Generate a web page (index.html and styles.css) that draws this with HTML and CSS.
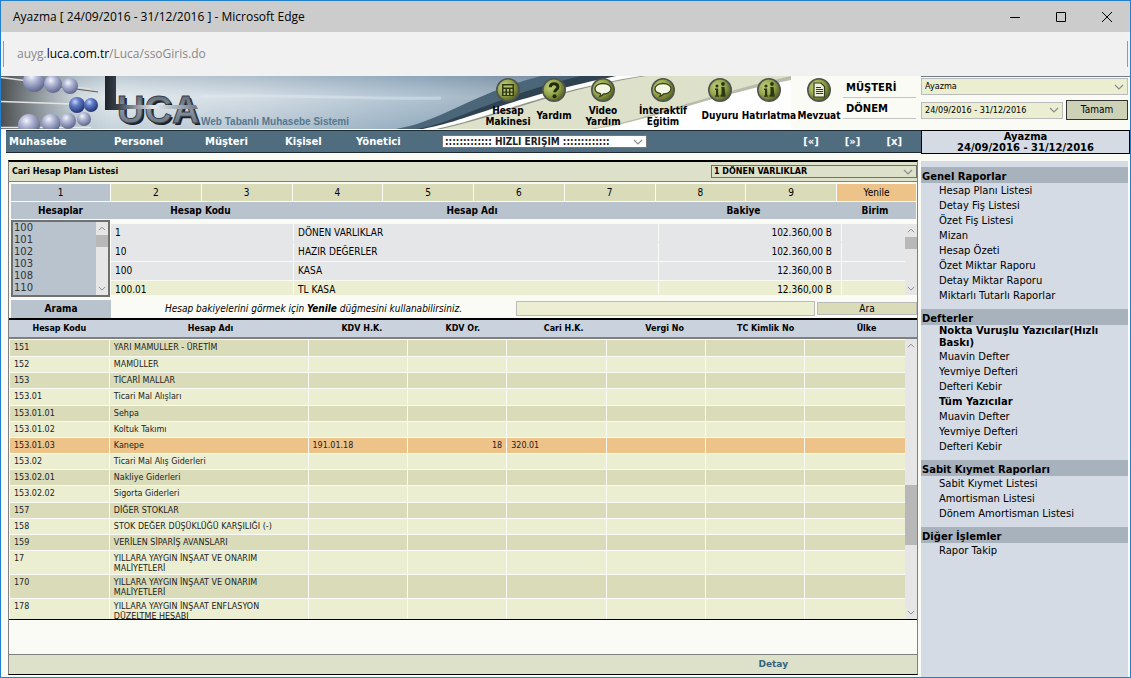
FILE: index.html
```html
<!DOCTYPE html>
<html lang="tr">
<head>
<meta charset="utf-8">
<title>Ayazma [ 24/09/2016 - 31/12/2016 ]</title>
<link rel="stylesheet" href="styles.css">
</head>
<body>
<svg width="0" height="0" class="defs" aria-hidden="true">
  <defs>
    <radialGradient id="ball" cx="38%" cy="30%" r="75%"><stop offset="0" stop-color="#f4f5fc"/><stop offset=".35" stop-color="#b3b9d6"/><stop offset="1" stop-color="#565e86"/></radialGradient>
    <radialGradient id="ballBlue" cx="38%" cy="30%" r="75%"><stop offset="0" stop-color="#c9d6fa"/><stop offset=".35" stop-color="#5f7cc8"/><stop offset="1" stop-color="#1d2d66"/></radialGradient>
    <radialGradient id="badge" cx="35%" cy="35%" r="75%"><stop offset="0" stop-color="#c4d27e"/><stop offset=".5" stop-color="#93a44a"/><stop offset="1" stop-color="#46521a"/></radialGradient>
    <linearGradient id="sky" x1="0" x2="1"><stop offset="0" stop-color="#8a949a"/><stop offset=".08" stop-color="#b4c0c6"/><stop offset=".2" stop-color="#dde6ea"/><stop offset=".45" stop-color="#c8d4de"/><stop offset=".75" stop-color="#9db4c6"/><stop offset="1" stop-color="#8094a4"/></linearGradient>
    <linearGradient id="shade" x1="0" x2="0" y1="0" y2="1"><stop offset="0" stop-color="#5f7c94" stop-opacity=".25"/><stop offset=".4" stop-color="#fff" stop-opacity=".2"/><stop offset="1" stop-color="#7390a6" stop-opacity=".2"/></linearGradient>
    <linearGradient id="rods" x1="0" x2="1"><stop offset="0" stop-color="#4e5052"/><stop offset="1" stop-color="#8a949a" stop-opacity="0"/></linearGradient>
    <linearGradient id="steel" x1="0" x2="0" y1="0" y2="1"><stop offset="0" stop-color="#525a66"/><stop offset=".5" stop-color="#8994a4"/><stop offset="1" stop-color="#5a6472"/></linearGradient>
    <linearGradient id="dark" x1="0" x2="1"><stop offset="0" stop-color="#1f242b"/><stop offset="1" stop-color="#4d5561"/></linearGradient>
    <linearGradient id="bar" x1="0" x2="1"><stop offset="0" stop-color="#3a424d"/><stop offset=".45" stop-color="#e6eaee"/><stop offset="1" stop-color="#6e7884"/></linearGradient>
    <symbol id="up" viewBox="0 0 8 5"><path d="M1 4.2 4 1.2 7 4.2" fill="none" stroke="#8c8c8c"/></symbol>
    <symbol id="down" viewBox="0 0 10 6"><path d="M1 1 5 5 9 1" fill="none" stroke="#8c8c8c" stroke-width="1.2"/></symbol>
    <symbol id="disc" viewBox="0 0 24 24"><circle cx="12" cy="12" r="11.2" fill="url(#badge)" stroke="#50544f" stroke-width="1.6"/></symbol>
    <symbol id="bubble" viewBox="0 0 24 24"><use href="#disc"/><path d="M12 5.5c4.800 0 8 2.300 8 5.300s-3.300 5.200-7.500 5.200c-.9 1.200-2 2-3.600 2.400.6-.9.8-1.700.6-2.700C6.300 15 4 13.200 4 10.800c0-3 3.200-5.300 8-5.300z" fill="#f4f6e4" stroke="#3b4418" stroke-width="1.300"/></symbol>
    <symbol id="people" viewBox="0 0 24 24"><use href="#disc"/><g fill="#2d3613"><circle cx="9" cy="8" r="1.600"/><path d="M7 10.500h3.200v7h1v1.300H7v-1.300h1v-5.500H7z"/><circle cx="15" cy="6" r="1.900"/><path d="M13.200 9h3.300l1 8.300v1.500h-5v-1.500l1-1v-5.500z"/></g></symbol>
  </defs>
</svg>
<div class="window">
  <header class="titlebar">
    <span class="title">Ayazma [ 24/09/2016 - 31/12/2016 ] - Microsoft Edge</span>
    <button class="win" aria-label="Simge durumuna küçült"><svg width="12" height="12"><path d="M1 6.500h10" stroke="#000"/></svg></button>
    <button class="win" aria-label="Ekranı kapla"><svg width="12" height="12"><path d="M1.500 1.500h9v9h-9z" fill="none" stroke="#000"/></svg></button>
    <button class="win" aria-label="Kapat"><svg width="12" height="12"><path d="M1 1l10 10M11 1 1 11" stroke="#000"/></svg></button>
  </header>
  <div class="address"><div class="url">auyg.<b>luca.com.tr</b>/Luca/ssoGiris.do</div></div>

  <div class="app">
    <div class="main">
      <div class="banner">
        <svg class="art" width="920" height="53" aria-hidden="true">
          <rect width="560" height="53" fill="url(#sky)"/>
          <rect width="560" height="53" fill="url(#shade)"/>
          <rect width="80" height="53" fill="url(#rods)"/>
          <path d="M200 20C300 18 380 24 440 22" stroke="#e5edf2" stroke-width="3" fill="none" opacity=".4"/>
          <path d="M0 1.500 90 13" stroke="#dcdcdc" stroke-width="1.500"/><path d="M60 11 97 16" stroke="#5b5b52"/>
          <path d="M0 25.500 72 28M0 51.500h90" stroke="#e4e4e2" stroke-width="1.500"/>
          <g fill="url(#ball)"><circle cx="33" cy="5" r="11"/><circle cx="52" cy="8" r="9"/><circle cx="69" cy="10" r="8"/><circle cx="28" cy="49" r="11"/><circle cx="50" cy="47" r="9.500"/><circle cx="67" cy="45" r="8"/><circle cx="83" cy="43" r="7"/></g>
          <g fill="url(#ballBlue)"><circle cx="76" cy="29" r="8"/><circle cx="90" cy="29" r="7"/></g>
          <g class="logo-text"><text x="118" y="49" fill="#1c2128">UCA</text><text x="116" y="47" fill="url(#steel)" stroke="#39414c">UCA</text></g>
          <path d="M104 0h11v28h10v6h-21z" fill="url(#dark)"/>
          <path d="M117 29h78l2 4h-80z" fill="url(#bar)"/>
          <path d="M395 53C440 46 470 18 540 0H790V53z" fill="#4b6679"/>
          <path d="M415 53C450 48 495 20 580 0H920V53z" fill="#2f4252"/>
          <path d="M422 53C470 44 500 24 615 0H920V53z" fill="#fdfdfa"/>
          <path d="M435 53C490 42 540 16 640 0H920V53z" fill="#8d958c"/>
          <path d="M440 53C495 42 545 16 645 0H920V53z" fill="#dde1ca"/>
          <path d="M590 53C640 46 700 20 790 0V53z" fill="#b9bcac"/>
          <path d="M594 53C645 46 710 20 790 4V53z" fill="#fff"/>
          <path d="M790 0h130v53H790z" fill="#fafbf5"/>
        </svg>
        <div class="slogan">Web Tabanlı Muhasebe Sistemi</div>
        <nav class="tools">
          <a href="#" class="t46"><svg width="24" height="24"><use href="#disc"/><path d="M6 6h12v12H6z" fill="#2f3814"/><path d="M7.500 7.500h9v2h-9zM7.500 11h2v2.500h-2zM11 11h2v2.500h-2zM14.500 11h2v2.500h-2zM7.500 14.800h2V17h-2zM11 14.800h2V17h-2zM14.500 14.800h2V17h-2z" fill="#b4c26a"/></svg><span>Hesap<br>Makinesi</span></a>
          <a href="#" class="t46"><svg width="24" height="24"><use href="#disc"/><path d="M8.300 9.300c0-2.400 1.500-3.600 3.700-3.600s3.900 1.200 3.900 3.200c0 2.500-3.300 2.900-3.300 5.400" fill="none" stroke="#222a0c" stroke-width="3"/><circle cx="12.500" cy="18.200" r="2" fill="#222a0c"/></svg><span>Yardım</span></a>
          <a href="#" class="t52"><svg width="24" height="24"><use href="#bubble"/></svg><span>Video<br>Yardım</span></a>
          <a href="#" class="t68"><svg width="24" height="24"><use href="#bubble"/></svg><span>İnteraktif<br>Eğitim</span></a>
          <a href="#" class="t46"><svg width="24" height="24"><use href="#people"/></svg><span>Duyuru</span></a>
          <a href="#" class="t52"><svg width="24" height="24"><use href="#people"/></svg><span>Hatırlatma</span></a>
          <a href="#" class="t48"><svg width="24" height="24"><use href="#disc"/><path d="M7 5h7l3.500 3.500V19H7z" fill="#eef0dc" stroke="#343d16" stroke-width="1.200"/><path d="M9 9.500h5M9 11.500h7M9 13.500h7M9 15.500h7" stroke="#343d16"/></svg><span>Mevzuat</span></a>
        </nav>
        <div class="labels"><label for="musteri">MÜŞTERİ</label><label for="donem">DÖNEM</label></div>
      </div>

      <nav class="menubar">
        <a href="#" class="m105">Muhasebe</a><a href="#" class="m91">Personel</a><a href="#" class="m80">Müşteri</a><a href="#" class="m71">Kişisel</a><a href="#" class="m86">Yönetici</a>
        <span class="pick quick"><select aria-label="Hızlı erişim"><option>::::::::::::: HIZLI ERİŞİM :::::::::::::</option></select><svg width="10" height="6"><use href="#down"/></svg></span>
        <span class="jump"><a href="#">[«]</a><a href="#">[»]</a><a href="#">[x]</a></span>
      </nav>

      <section class="panel">
        <div class="caption"><h1>Cari Hesap Planı Listesi</h1>
          <span class="pick group"><select aria-label="Hesap grubu"><option>1 DÖNEN VARLIKLAR</option></select><svg width="10" height="6"><use href="#down"/></svg></span></div>
        <div class="tabs"><button class="on">1</button><button>2</button><button>3</button><button>4</button><button>5</button><button>6</button><button>7</button><button>8</button><button>9</button><button class="refresh">Yenile</button></div>
        <div class="heads"><span>Hesaplar</span><span>Hesap Kodu</span><span>Hesap Adı</span><span>Bakiye</span><span>Birim</span></div>
        <div class="accounts">
          <div class="listbox">
            <select size="6" aria-label="Hesaplar"><option>100</option><option>101</option><option>102</option><option>103</option><option>108</option><option>110</option></select>
            <div class="scroll"><svg width="8" height="5"><use href="#up"/></svg><i class="thumb short"></i><svg width="8" height="5"><use href="#down"/></svg></div>
          </div>
          <div class="balance">
            <table>
              <colgroup><col class="w23"><col class="w46"><col class="w23"><col></colgroup>
              <tr class="joined"><td>1</td><td>DÖNEN VARLIKLAR</td><td>102.360,00 B</td><td></td></tr>
              <tr><td>10</td><td>HAZIR DEĞERLER</td><td>102.360,00 B</td><td></td></tr>
              <tr><td>100</td><td>KASA</td><td>12.360,00 B</td><td></td></tr>
              <tr class="leaf"><td>100.01</td><td>TL KASA</td><td>12.360,00 B</td><td></td></tr>
            </table>
            <div class="scroll"><svg width="8" height="5"><use href="#up"/></svg><i class="thumb short"></i><svg width="8" height="5"><use href="#down"/></svg></div>
          </div>
        </div>
        <form class="search">
          <label for="arama">Arama</label>
          <p>Hesap bakiyelerini görmek için <b>Yenile</b> düğmesini kullanabilirsiniz.</p>
          <input id="arama" type="text"><button type="button">Ara</button>
        </form>
        <div class="list-heads"><span>Hesap Kodu</span><span>Hesap Adı</span><span>KDV H.K.</span><span>KDV Or.</span><span>Cari H.K.</span><span>Vergi No</span><span>TC Kimlik No</span><span>Ülke</span></div>
        <div class="list">
          <div class="rows">
          <table>
            <colgroup><col class="w11"><col class="w22"><col class="w11"><col class="w11"><col class="w11"><col class="w11"><col class="w11"><col></colgroup>
            <tr><td>151</td><td>YARI MAMULLER - ÜRETİM</td><td></td><td></td><td></td><td></td><td></td><td></td></tr>
            <tr><td>152</td><td>MAMÜLLER</td><td></td><td></td><td></td><td></td><td></td><td></td></tr>
            <tr><td>153</td><td>TİCARİ MALLAR</td><td></td><td></td><td></td><td></td><td></td><td></td></tr>
            <tr><td>153.01</td><td>Ticari Mal Alışları</td><td></td><td></td><td></td><td></td><td></td><td></td></tr>
            <tr><td>153.01.01</td><td>Sehpa</td><td></td><td></td><td></td><td></td><td></td><td></td></tr>
            <tr><td>153.01.02</td><td>Koltuk Takımı</td><td></td><td></td><td></td><td></td><td></td><td></td></tr>
            <tr class="picked"><td>153.01.03</td><td>Kanepe</td><td>191.01.18</td><td class="num">18</td><td>320.01</td><td></td><td></td><td></td></tr>
            <tr><td>153.02</td><td>Ticari Mal Alış Giderleri</td><td></td><td></td><td></td><td></td><td></td><td></td></tr>
            <tr><td>153.02.01</td><td>Nakliye Giderleri</td><td></td><td></td><td></td><td></td><td></td><td></td></tr>
            <tr><td>153.02.02</td><td>Sigorta Giderleri</td><td></td><td></td><td></td><td></td><td></td><td></td></tr>
            <tr><td>157</td><td>DİĞER STOKLAR</td><td></td><td></td><td></td><td></td><td></td><td></td></tr>
            <tr><td>158</td><td>STOK DEĞER DÜŞÜKLÜĞÜ KARŞILIĞI (-)</td><td></td><td></td><td></td><td></td><td></td><td></td></tr>
            <tr><td>159</td><td>VERİLEN SİPARİŞ AVANSLARI</td><td></td><td></td><td></td><td></td><td></td><td></td></tr>
            <tr><td>17</td><td>YILLARA YAYGIN İNŞAAT VE ONARIM MALİYETLERİ</td><td></td><td></td><td></td><td></td><td></td><td></td></tr>
            <tr><td>170</td><td>YILLARA YAYGIN İNŞAAT VE ONARIM MALİYETLERİ</td><td></td><td></td><td></td><td></td><td></td><td></td></tr>
            <tr><td>178</td><td>YILLARA YAYGIN İNŞAAT ENFLASYON DÜZELTME HESABI</td><td></td><td></td><td></td><td></td><td></td><td></td></tr>
          </table>
          </div>
          <div class="scroll"><svg width="8" height="5"><use href="#up"/></svg><i class="space"></i><i class="thumb"></i><i class="gap"></i><svg width="8" height="5"><use href="#down"/></svg></div>
        </div>
        <div class="blank"></div>
        <footer class="detail"><a href="#">Detay</a></footer>
      </section>
    </div>

    <aside class="side">
      <form class="client">
        <span class="pick full"><select id="musteri"><option>Ayazma</option></select><svg width="10" height="6"><use href="#down"/></svg></span>
        <span class="pick"><select id="donem"><option>24/09/2016 - 31/12/2016</option></select><svg width="10" height="6"><use href="#down"/></svg></span>
        <button type="button">Tamam</button>
      </form>
      <div class="current">Ayazma<br>24/09/2016 - 31/12/2016</div>
      <nav class="reports">
        <h2>Genel Raporlar</h2>
        <ul><li><a href="#">Hesap Planı Listesi</a></li><li><a href="#">Detay Fiş Listesi</a></li><li><a href="#">Özet Fiş Listesi</a></li><li><a href="#">Mizan</a></li><li><a href="#">Hesap Özeti</a></li><li><a href="#">Özet Miktar Raporu</a></li><li><a href="#">Detay Miktar Raporu</a></li><li><a href="#">Miktarlı Tutarlı Raporlar</a></li></ul>
        <h2>Defterler</h2>
        <ul><li class="long"><b>Nokta Vuruşlu Yazıcılar(Hızlı Baskı)</b></li><li><a href="#">Muavin Defter</a></li><li><a href="#">Yevmiye Defteri</a></li><li><a href="#">Defteri Kebir</a></li><li><b>Tüm Yazıcılar</b></li><li><a href="#">Muavin Defter</a></li><li><a href="#">Yevmiye Defteri</a></li><li><a href="#">Defteri Kebir</a></li></ul>
        <h2>Sabit Kıymet Raporları</h2>
        <ul><li><a href="#">Sabit Kıymet Listesi</a></li><li><a href="#">Amortisman Listesi</a></li><li><a href="#">Dönem Amortisman Listesi</a></li></ul>
        <h2>Diğer İşlemler</h2>
        <ul><li><a href="#">Rapor Takip</a></li></ul>
      </nav>
    </aside>
  </div>
</div>
</body>
</html>
```
FILE: styles.css
```css
* { box-sizing: border-box; }
body { margin: 0; font: 10px/12px "DejaVu Sans", sans-serif; color: #000; }
a { color: inherit; text-decoration: none; }
h1, h2, p, ul { margin: 0; padding: 0; }
button, select, input { font: inherit; color: inherit; border-radius: 0; margin: 0; }
button { cursor: pointer; padding: 0; }
svg { flex: none; }
.defs { position: absolute; }

.window { display: flex; flex-direction: column; height: 100vh; border: 1px solid #2080cf; background: #fafbf5; }
.titlebar { display: flex; align-items: center; flex: none; height: 31px; background: #ccc; padding-left: 12px; }
.title { flex: 1; font: 12px/16px "Noto Sans", sans-serif; }
.win { display: flex; align-items: center; justify-content: center; width: 46px; height: 31px; border: 0; background: none; }
.address { flex: none; height: 44px; padding: 9px 2px; background: #f1f1f1; }
.url { height: 26px; padding-left: 13px; border: solid #999; border-width: 0 1px; font: 12px/26px "Noto Sans", sans-serif; color: #888; }
.url b { font-weight: 400; color: #000; }
.title, .url { font-family: "Open Sans", sans-serif; }

.app { flex: 1; min-height: 0; display: grid; grid-template-columns: minmax(0, 1fr) 209px; }
.main { display: flex; flex-direction: column; min-height: 0; }

.banner { position: relative; flex: none; display: flex; justify-content: flex-end; height: 53px; overflow: hidden; font-family: "DejaVu Sans Condensed", sans-serif; font-weight: 700; }
.art { position: absolute; top: 0; left: 0; }
.logo-text { font: 700 38px "Liberation Sans", sans-serif; }
.slogan { position: absolute; left: 200px; top: 40px; font: 700 10px/12px "Liberation Sans", sans-serif; color: #55788f; }
.tools { position: relative; display: flex; }
.tools a { display: flex; flex-direction: column; align-items: center; padding-top: 2px; white-space: nowrap; }
.tools span { display: flex; flex: 1; align-items: center; text-align: center; line-height: 11px; }
.t46 { width: 46px; } .t48 { width: 48px; } .t52 { width: 52px; } .t68 { width: 68px; }
.labels { position: relative; width: 78px; padding: 1px 5px 0 0; font-family: "DejaVu Sans", sans-serif; }
.labels label { display: block; height: 21px; padding: 5px 0 0 3px; border-bottom: 1px solid #c4c4c4; }

.menubar { display: flex; flex: none; align-items: center; height: 23px; margin: 1px 0 0 5px; padding-left: 3px; background: #506d7f; border: solid #1e2b33; border-width: 1px 0; color: #fff; font-weight: 700; }
.m105 { width: 105px; } .m91 { width: 91px; } .m80 { width: 80px; } .m71 { width: 71px; } .m86 { width: 86px; }
.jump { display: flex; margin-left: auto; padding-right: 19px; gap: 26px; }

.pick { position: relative; display: flex; }
.pick select { width: 100%; appearance: none; outline: 0; padding: 0 16px 0 2px; }
.pick svg { position: absolute; right: 4px; top: 50%; margin-top: -3px; pointer-events: none; }
.quick { width: 205px; }
.quick select { height: 13px; line-height: 11px; border: 1px solid #777; background: #fff; color: #222; font-family: "DejaVu Sans Condensed", sans-serif; font-weight: 700; }

.panel { display: flex; flex-direction: column; flex: 1; min-height: 0; margin: 7px 3px 2px 7px; border: solid #808080; border-width: 0 1px; border-bottom: 1px solid #000; border-top: 2px solid #000; }
.caption { display: flex; flex: none; align-items: center; justify-content: space-between; height: 20px; padding-left: 3px; background: #dde1ca; border-bottom: 1px solid #808080; }
.caption h1 { font-size: 8px; }
.group { width: 206px; }
.group select { height: 13px; line-height: 11px; border: 1px solid #707070; background: #dde1ca; font-size: 8px; font-weight: 700; }

.tabs, .heads, .accounts, .search { font-family: "DejaVu Sans Condensed", sans-serif; }
.tabs { display: grid; flex: none; grid-template-columns: 99px repeat(8, 1fr) 79px; gap: 1px; padding: 2px 1px 1px 2px; }
.tabs button { height: 17px; border: 0; background: #d9dbb9; }
.tabs .on { background: #b9c3ce; }
.tabs .refresh { background: #edc38a; }
.heads { display: grid; flex: none; grid-template-columns: 99px 20% 40% 20% 1fr; margin: 0 1px 0 2px; background: #b9c3ce; font-weight: 700; text-align: center; line-height: 17px; }
.accounts { display: flex; flex: none; height: 77px; margin-top: 1px; padding-left: 2px; gap: 1px; }
.listbox { display: flex; width: 99px; border: 2px solid #707070; background: #b9c3ce; }
.listbox select { flex: 1; min-width: 0; height: 73px; padding: 0; border: 0; outline: 0; overflow: hidden; background: none; color: #333; font-family: "DejaVu Sans", sans-serif; }
.listbox option { min-height: 12px; padding: 0 1px; line-height: 12px; }
.balance { display: flex; flex: 1; height: 71px; margin-top: 4px; overflow: hidden; }
.scroll { display: flex; flex: none; flex-direction: column; align-items: center; width: 12px; padding: 4px 0; background: #e6e6e6; }
.scroll .thumb { width: 12px; flex: none; background: #b8b8b8; height: 60px; }
.scroll .short { height: 12px; margin: 4px 0 auto; }
.scroll .space { flex: 135; } .scroll .gap { flex: 64; }

table { width: 100%; table-layout: fixed; border-collapse: collapse; }
td { padding: 0; vertical-align: top; border-right: 1px solid #fafbf5; border-bottom: 1px solid #fafbf5; }
.w23 { width: 23%; } .w46 { width: 46%; } .w11 { width: 11.1%; } .w22 { width: 22.2%; }
.balance td { height: 19px; padding: 0 9px 0 4px; line-height: 18px; background: #e5e6e8; }
.balance td:nth-child(3) { text-align: right; }
.balance td:last-child, .list td:last-child { border-right: 0; }
.balance .joined td { height: 18px; border-bottom-color: #e5e6e8; line-height: 17px; }
.balance .leaf td { background: #ebeed0; }

.search { display: flex; flex: none; height: 21px; padding: 3px 0 0 2px; }
.search label { width: 100px; background: #b9c3ce; font-weight: 700; line-height: 18px; text-align: center; }
.search p { flex: 1; font-style: italic; line-height: 18px; text-align: center; }
.search input { width: 33%; height: 15px; margin-top: 1px; padding: 0 3px; border: 1px solid #bbb; background: #ebeed0; }
.search button { width: 100px; height: 13px; margin: 2px 0 0 2px; line-height: 11px; border: 1px solid #bbb; background: #d9dbb9; }

.list-heads { display: grid; flex: none; grid-template-columns: 11.1% 22.2% repeat(6, minmax(0, 1fr)); background: #c9d2dd; border-top: 2px solid #000; border-bottom: 2px solid #808080; font-size: 8px; font-weight: 700; line-height: 17px; text-align: center; }
.list { display: flex; flex: 1; min-height: 0; padding-left: 1px; border-bottom: 1px solid #000; }
.rows { flex: 1; overflow: hidden; padding-top: 1px; }
.list td { height: 16px; padding: 3px 4px 0; line-height: 10px; font-size: 8px; background: #ebeed0; color: #222; }
.list tr:nth-child(6n+4) td { height: 17px; }
.list tr:nth-child(2n+1) td { background: #d9dbb9; }
.list tr.picked td { background: #edc38a; }
.list .num { text-align: right; }
.blank { flex: none; height: 34px; }
.detail { flex: none; height: 20px; padding-right: 129px; border-top: 1px solid #808080; background: #dde1ca; color: #36617f; font-weight: 700; font-size: 9px; line-height: 19px; text-align: right; }

.side { display: flex; flex-direction: column; min-height: 0; font-size: 10px; }
.client { display: grid; flex: none; grid-template-columns: 1fr 62px; gap: 5px 3px; height: 54px; padding: 1px 2px 0 0; border-top: 1px solid #6f7f88; font-family: "DejaVu Sans Condensed", sans-serif; align-items: center; align-content: start; }
.client .full { grid-column: 1 / 3; }
.client select { height: 17px; line-height: 15px; border: 1px solid #bbb; background: #ebeed0; font-size: 9px; padding-left: 3px; }
.client button { height: 20px; border: 1px solid #333; background: #cdd1b6; }
.current { flex: none; height: 24px; border: 1px solid #000; background: #d5dbe4; font-weight: 700; line-height: 11px; text-align: center; }
.reports { flex: 1; min-height: 0; margin: 7px 2px 0 0; padding-top: 6px; background: #d5dbe4; }
.reports h2 { height: 16px; padding: 4px 0 0 1px; background: #a8b2bd; font-size: 10px; line-height: 12px; white-space: nowrap; }
.reports ul { list-style: none; margin-bottom: 6px; padding: 0 20px 0 18px; }
.reports li { line-height: 15px; }
.reports .long { line-height: 12px; }
```
